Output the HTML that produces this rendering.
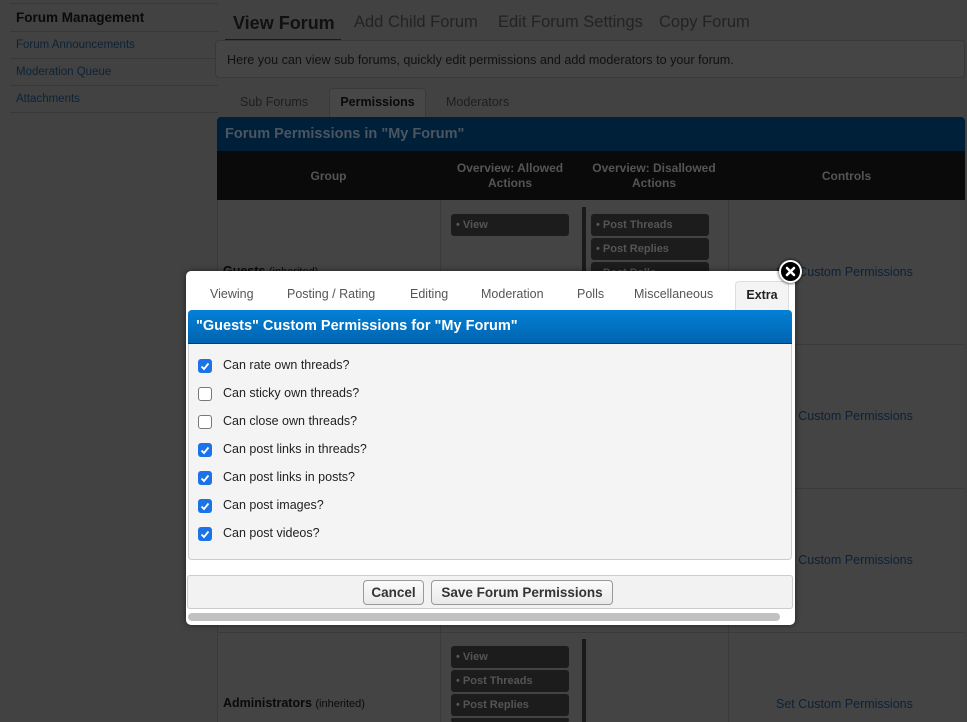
<!DOCTYPE html>
<html style="background:#424242;width:967px;height:722px;overflow:hidden"><head><meta charset="utf-8"><style>
*{box-sizing:border-box;margin:0;padding:0}
body{width:967px;height:722px;overflow:hidden;background:#424242;font-family:"Liberation Sans",sans-serif;font-size:12px;position:relative}
.a{position:absolute}
.side{left:10px;top:3px;width:208px;border-top:1px solid #383838}
.side div{height:27px;line-height:27px;border-bottom:1px solid #383838;padding-left:6px;color:#0d2236;font-size:11.5px}
.side div.h{color:#0a0a0a;font-weight:bold;font-size:13.5px;height:28px}
.pill{position:absolute;width:118px;height:22px;background:#1c1c1c;border-radius:3px;color:#555;font-size:11px;line-height:22px;padding-left:5px;font-weight:bold}
.lnk{position:absolute;color:#0d2236;font-size:12.5px}
.cb{position:absolute;left:198px;width:14px;height:14px;border-radius:3px}
.cb.on{background:#1a73e8}
.cb.off{background:#fff;border:1.5px solid #777}
.lbl{position:absolute;left:223px;color:#222;font-size:12.5px}
.btn{position:absolute;top:580px;height:25px;border:1px solid #999;border-radius:4px;background:linear-gradient(#fbfbfb,#e9e9e9);font-weight:bold;font-size:13.5px;color:#333;line-height:23px;text-align:center}
</style></head><body>
<div class="a side"><div class="h">Forum Management</div><div>Forum Announcements</div><div>Moderation Queue</div><div>Attachments</div></div>

<div class="a" style="left:233px;top:13px;font-size:18px;color:#111;font-weight:bold">View Forum</div>
<div class="a" style="left:354px;top:13px;font-size:16.5px;color:#232323">Add Child Forum</div>
<div class="a" style="left:498px;top:13px;font-size:16.5px;color:#232323">Edit Forum Settings</div>
<div class="a" style="left:659px;top:13px;font-size:16.5px;color:#232323">Copy Forum</div>
<div class="a" style="left:225px;top:39px;width:116px;height:3px;background:#1a1a1a"></div>
<div class="a" style="left:215px;top:40px;width:750px;height:38px;border:1px solid #393939;border-radius:4px;background:#454545;padding:12px 0 0 11px;color:#111;font-size:12.6px">Here you can view sub forums, quickly edit permissions and add moderators to your forum.</div>
<div class="a" style="left:240px;top:95px;color:#1e1e1e;font-size:12.5px">Sub Forums</div>
<div class="a" style="left:329px;top:88px;width:97px;height:30px;border:1px solid #3a3a3a;border-bottom:none;border-radius:4px 4px 0 0;background:#474747;color:#0a0a0a;font-weight:bold;text-align:center;line-height:26px;font-size:12.5px">Permissions</div>
<div class="a" style="left:446px;top:95px;color:#1e1e1e;font-size:12.5px">Moderators</div>

<div class="a" style="left:217px;top:117px;width:748px;height:34px;background:#00203a;border-radius:4px 4px 0 0;color:#4a5560;font-weight:bold;font-size:14.5px;padding:9px 0 0 8px">Forum Permissions in "My Forum"</div>
<div class="a" style="left:217px;top:151px;width:748px;height:49px;background:#0a0a0a;color:#555;font-weight:bold;font-size:12px">
<div class="a" style="left:0;width:223px;top:18px;text-align:center">Group</div>
<div class="a" style="left:223px;width:140px;top:10px;text-align:center;line-height:15px">Overview: Allowed<br>Actions</div>
<div class="a" style="left:363px;width:148px;top:10px;text-align:center;line-height:15px">Overview: Disallowed<br>Actions</div>
<div class="a" style="left:511px;width:237px;top:18px;text-align:center">Controls</div>
</div>
<div class="a" style="left:217px;top:200px;width:748px;height:522px;background:#444;border-left:1px solid #3a3a3a"></div>
<div class="a" style="left:440px;top:200px;width:1px;height:522px;background:#3a3a3a"></div>
<div class="a" style="left:728px;top:200px;width:1px;height:522px;background:#3a3a3a"></div>
<div class="a" style="left:217px;top:344px;width:748px;height:1px;background:#3a3a3a"></div>
<div class="a" style="left:217px;top:488px;width:748px;height:1px;background:#3a3a3a"></div>
<div class="a" style="left:217px;top:632px;width:748px;height:1px;background:#3a3a3a"></div>
<div class="a" style="left:582px;top:207px;width:4px;height:70px;background:#1a1a1a"></div>
<div class="a" style="left:582px;top:639px;width:4px;height:83px;background:#1a1a1a"></div>
<div class="pill" style="left:451px;top:214px">• View</div>
<div class="pill" style="left:591px;top:214px">• Post Threads</div>
<div class="pill" style="left:591px;top:238px">• Post Replies</div>
<div class="pill" style="left:591px;top:262px">• Post Polls</div>
<div class="pill" style="left:451px;top:646px">• View</div>
<div class="pill" style="left:451px;top:670px">• Post Threads</div>
<div class="pill" style="left:451px;top:694px">• Post Replies</div>
<div class="pill" style="left:451px;top:718px;height:4px"></div>
<div class="a" style="left:223px;top:264px;color:#0a0a0a;font-weight:bold;font-size:12.5px">Guests <span style="font-weight:normal;font-size:11px">(inherited)</span></div>
<div class="a" style="left:223px;top:696px;color:#0a0a0a;font-weight:bold;font-size:12.5px">Administrators <span style="font-weight:normal;font-size:11px">(inherited)</span></div>
<div class="lnk" style="left:776px;top:265px">Set Custom Permissions</div>
<div class="lnk" style="left:776px;top:409px">Set Custom Permissions</div>
<div class="lnk" style="left:776px;top:553px">Set Custom Permissions</div>
<div class="lnk" style="left:776px;top:697px">Set Custom Permissions</div>

<div class="a" style="left:186px;top:271px;width:609px;height:354px;background:#fff;border-radius:5px;box-shadow:0 0 6px rgba(0,0,0,.5)"></div>
<div class="a" style="top:287px;left:210px;color:#555;font-size:12.5px">Viewing</div>
<div class="a" style="top:287px;left:287px;color:#555;font-size:12.5px">Posting / Rating</div>
<div class="a" style="top:287px;left:410px;color:#555;font-size:12.5px">Editing</div>
<div class="a" style="top:287px;left:481px;color:#555;font-size:12.5px">Moderation</div>
<div class="a" style="top:287px;left:577px;color:#555;font-size:12.5px">Polls</div>
<div class="a" style="top:287px;left:634px;color:#555;font-size:12.5px">Miscellaneous</div>
<div class="a" style="top:281px;left:735px;width:54px;height:30px;border:1px solid #ddd;border-bottom:none;border-radius:4px 4px 0 0;background:#f4f4f4;color:#222;font-weight:bold;font-size:12.5px;text-align:center;line-height:27px">Extra</div>
<div class="a" style="left:188px;top:310px;width:604px;height:250px;background:#f4f4f4;border:1px solid #ccc;border-radius:4px"></div>
<div class="a" style="left:188px;top:310px;width:604px;height:34px;background:linear-gradient(#0580d6,#0064b0);border-radius:4px 4px 0 0;border-bottom:1px solid #0b3b5e;color:#fff;font-weight:bold;font-size:14.5px;padding:8px 0 0 8px">"Guests" Custom Permissions for "My Forum"</div>
<div class="cb on" style="top:359px"><svg width="14" height="14"><path d="M3.5 7.5l2.5 2.5 4.5-5.5" stroke="#fff" stroke-width="1.8" fill="none"/></svg></div><div class="lbl" style="top:358px">Can rate own threads?</div>
<div class="cb off" style="top:387px"></div><div class="lbl" style="top:386px">Can sticky own threads?</div>
<div class="cb off" style="top:415px"></div><div class="lbl" style="top:414px">Can close own threads?</div>
<div class="cb on" style="top:443px"><svg width="14" height="14"><path d="M3.5 7.5l2.5 2.5 4.5-5.5" stroke="#fff" stroke-width="1.8" fill="none"/></svg></div><div class="lbl" style="top:442px">Can post links in threads?</div>
<div class="cb on" style="top:471px"><svg width="14" height="14"><path d="M3.5 7.5l2.5 2.5 4.5-5.5" stroke="#fff" stroke-width="1.8" fill="none"/></svg></div><div class="lbl" style="top:470px">Can post links in posts?</div>
<div class="cb on" style="top:499px"><svg width="14" height="14"><path d="M3.5 7.5l2.5 2.5 4.5-5.5" stroke="#fff" stroke-width="1.8" fill="none"/></svg></div><div class="lbl" style="top:498px">Can post images?</div>
<div class="cb on" style="top:527px"><svg width="14" height="14"><path d="M3.5 7.5l2.5 2.5 4.5-5.5" stroke="#fff" stroke-width="1.8" fill="none"/></svg></div><div class="lbl" style="top:526px">Can post videos?</div>
<div class="a" style="left:187px;top:575px;width:606px;height:34px;background:#f2f2f2;border:1px solid #ccc;border-radius:3px"></div>
<div class="btn" style="left:363px;width:61px">Cancel</div>
<div class="btn" style="left:431px;width:182px">Save Forum Permissions</div>
<div class="a" style="left:188px;top:613px;width:592px;height:8px;background:#c1c1c1;border-radius:4px"></div>
<div class="a" style="left:779px;top:260px;width:23px;height:23px;border-radius:50%;background:#000;border:2px solid #fff;box-shadow:0 0 3px #000"><svg width="19" height="19" style="position:absolute;left:0;top:0"><path d="M6 6l7 7M13 6l-7 7" stroke="#fff" stroke-width="2.6" stroke-linecap="round"/></svg></div>
</body></html>
